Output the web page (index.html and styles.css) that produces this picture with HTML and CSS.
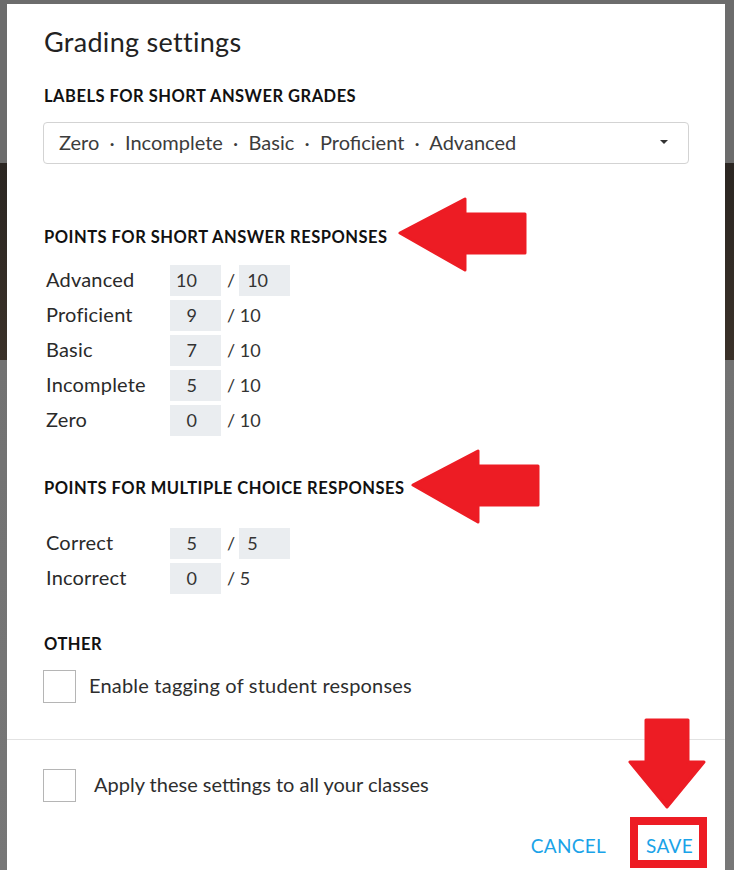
FILE: index.html
```html
<!DOCTYPE html>
<html>
<head>
<meta charset="UTF-8">
<title>Grading settings</title>
<link rel="stylesheet" href="styles.css">
</head>
<body>
<div class="page">
  <div class="modal">
    <div class="modal-body">
      <h1 class="title">Grading settings</h1>

      <h3 class="section-label">LABELS FOR SHORT ANSWER GRADES</h3>
      <div class="select">
        <span>Zero &nbsp;·&nbsp; Incomplete &nbsp;·&nbsp; Basic &nbsp;·&nbsp; Proficient &nbsp;·&nbsp; Advanced</span>
        <span class="caret"></span>
      </div>

      <h3 class="section-label gap-big">POINTS FOR SHORT ANSWER RESPONSES</h3>
      <div class="points first">
        <div class="row">
          <span class="row-label">Advanced</span>
          <span class="num">10</span>
          <span class="slash">/</span>
          <span class="num max">10</span>
        </div>
        <div class="row">
          <span class="row-label">Proficient</span>
          <span class="num">9</span>
          <span class="slash">/ 10</span>
        </div>
        <div class="row">
          <span class="row-label">Basic</span>
          <span class="num">7</span>
          <span class="slash">/ 10</span>
        </div>
        <div class="row">
          <span class="row-label">Incomplete</span>
          <span class="num">5</span>
          <span class="slash">/ 10</span>
        </div>
        <div class="row">
          <span class="row-label">Zero</span>
          <span class="num">0</span>
          <span class="slash">/ 10</span>
        </div>
      </div>

      <h3 class="section-label gap-mid">POINTS FOR MULTIPLE CHOICE RESPONSES</h3>
      <div class="points second">
        <div class="row">
          <span class="row-label">Correct</span>
          <span class="num">5</span>
          <span class="slash">/</span>
          <span class="num max">5</span>
        </div>
        <div class="row">
          <span class="row-label">Incorrect</span>
          <span class="num">0</span>
          <span class="slash">/ 5</span>
        </div>
      </div>

      <h3 class="section-label gap-other">OTHER</h3>
      <label class="check">
        <span class="box"></span>
        <span class="check-text">Enable tagging of student responses</span>
      </label>
    </div>

    <div class="modal-footer">
      <label class="check apply">
        <span class="box"></span>
        <span class="check-text">Apply these settings to all your classes</span>
      </label>
      <div class="actions">
        <span class="btn">CANCEL</span>
        <span class="btn">SAVE</span>
      </div>
    </div>
  </div>
</div>

<!-- annotation arrows drawn over the dialog -->
<svg class="mark mark-one" width="130" height="76" viewBox="0 0 130 76">
  <polygon points="3,36 68,2 68,17 128,17 128,56 68,56 68,73" />
</svg>
<svg class="mark mark-two" width="130" height="76" viewBox="0 0 130 76">
  <polygon points="3,36 68,2 68,17 128,17 128,56 68,56 68,73" />
</svg>
<svg class="mark mark-down" width="78" height="92" viewBox="0 0 78 92">
  <polygon points="18,2 60,2 60,44 76,44 39,89 2,44 18,44" />
</svg>
<div class="mark save-box"></div>
</body>
</html>
```

FILE: styles.css
```css
body {
	margin: 0;
	padding: 0;
	font-family: Lato, "Open Sans", Arial, sans-serif;
	color: #2a2a2a;
	background: linear-gradient(to bottom, #6c6c6c 0, #6c6c6c 163px, #2b2622 163px, #3a3129 360px, #727272 360px, #777777 870px);
	height: 870px;
	overflow: hidden;
}

.page {
	padding: 4px 9px 0 7px;
}

.modal {
	background: #ffffff;
	height: 866px;
	display: flex;
	flex-direction: column;
}

.modal-body {
	padding: 22px 36px 36px 36px;
}

.title {
	font-size: 27px;
	line-height: 32px;
	font-weight: normal;
	letter-spacing: 0.3px;
	margin: 0 0 0 1px;
	color: #222;
}

.section-label {
	font-size: 16.5px;
	line-height: 20px;
	font-weight: bold;
	letter-spacing: 0.5px;
	margin: 28px 0 0 1px;
	color: #111;
}

.gap-big { margin-top: 63px; }
.gap-mid { margin-top: 42px; }
.gap-other { margin-top: 40px; }

.select {
	margin-top: 16px;
	height: 42px;
	box-sizing: border-box;
	border: 1px solid #d3d3d3;
	border-radius: 4px;
	padding: 0 20px 2px 15px;
	display: flex;
	align-items: center;
	justify-content: space-between;
	font-size: 20px;
	color: #3c3c3c;
}

.caret {
	width: 0;
	height: 0;
	border-left: 4px solid transparent;
	border-right: 4px solid transparent;
	border-top: 4px solid #333;
}

.points {
	display: flex;
	flex-direction: column;
	gap: 4px;
}

.points.first { margin-top: 18px; }
.points.second { margin-top: 30px; }

.row {
	display: flex;
	align-items: center;
	height: 31px;
	font-size: 20px;
	letter-spacing: 0.2px;
}

.row-label {
	width: 124px;
	padding: 0 0 4px 3px;
}

.num {
	width: 51px;
	height: 31px;
	box-sizing: border-box;
	background: #eaedf0;
	text-align: right;
	padding-right: 24px;
	line-height: 30px;
	font-size: 18px;
	letter-spacing: 0;
	color: #333;
}

.num.max {
	text-align: left;
	padding: 0 0 0 8px;
}

.slash {
	margin: 0 4px 2px 6px;
	font-size: 18px;
	letter-spacing: 0;
	color: #333;
}

.check {
	display: flex;
	align-items: center;
	gap: 13px;
	margin-top: 16px;
	font-size: 20px;
	letter-spacing: 0.2px;
	color: #2e2e2e;
}

.check-text {
	padding-bottom: 4px;
}

.box {
	width: 33px;
	height: 33px;
	box-sizing: border-box;
	border: 1px solid #b5b5b5;
	flex-shrink: 0;
}

.modal-footer {
	border-top: 1px solid #e2e2e2;
	padding: 29px 32px 0 36px;
}

.check.apply {
	margin-top: 0;
	gap: 18px;
	letter-spacing: 0;
}

.actions {
	display: flex;
	justify-content: flex-end;
	gap: 40px;
	margin-top: 33px;
	font-size: 19px;
	line-height: 22px;
}

.btn {
	color: #1aa3e8;
	letter-spacing: 0.3px;
}

.mark {
	position: absolute;
}

.mark polygon {
	fill: #ed1c24;
	stroke: #ed1c24;
	stroke-width: 3;
	stroke-linejoin: round;
}

.mark-one {
	left: 397px;
	top: 197px;
}

.mark-two {
	left: 410px;
	top: 449px;
}

.mark-down {
	left: 628px;
	top: 718px;
}

.save-box {
	left: 630px;
	top: 817px;
	width: 61px;
	height: 35px;
	border: 8px solid #ed1c24;
}
```
